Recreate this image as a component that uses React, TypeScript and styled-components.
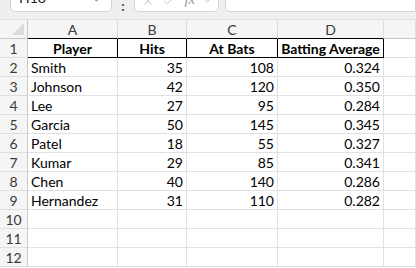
import React from "react";
import styled, { createGlobalStyle } from "styled-components";
import { X, Check, ChevronDown } from "lucide-react";

const GlobalStyle = createGlobalStyle`
  html, body {
    margin: 0;
    padding: 0;
    background: #ffffff;
    overflow: hidden;
  }
  body {
    font-family: Lato, "Liberation Sans", sans-serif;
  }
`;

const columns = ["A", "B", "C", "D", ""];
const headers = ["Player", "Hits", "At Bats", "Batting Average"];

const players = [
  ["Smith", 35, 108, "0.324"],
  ["Johnson", 42, 120, "0.350"],
  ["Lee", 27, 95, "0.284"],
  ["Garcia", 50, 145, "0.345"],
  ["Patel", 18, 55, "0.327"],
  ["Kumar", 29, 85, "0.341"],
  ["Chen", 40, 140, "0.286"],
  ["Hernandez", 31, 110, "0.282"],
];

export default function App() {
  return (
    <>
      <GlobalStyle />
      <Window>
        <FormulaBar>
          <NameBox>
            <span>H18</span>
            <ChevronDown size={13} strokeWidth={1.5} color="#555" />
          </NameBox>
          <Dots>:</Dots>
          <ActionBox>
            <X size={14} strokeWidth={1.3} color="#b5b5b5" />
            <Check size={14} strokeWidth={1.3} color="#b5b5b5" />
            <Fx>fx</Fx>
            <ChevronDown size={11} strokeWidth={1.5} color="#9a9a9a" />
          </ActionBox>
          <FormulaInput />
        </FormulaBar>

        <Sheet>
          <Corner>
            <CornerTriangle />
          </Corner>
          {columns.map((c, i) => (
            <ColHeader key={"h" + i} $boxed={i < 4}>
              {c}
            </ColHeader>
          ))}

          <RowHeader>1</RowHeader>
          {headers.map((h) => (
            <TitleCell key={h}>{h}</TitleCell>
          ))}
          <Cell />

          {players.map((p, r) => (
            <React.Fragment key={String(p[0])}>
              <RowHeader>{r + 2}</RowHeader>
              <Cell>{p[0]}</Cell>
              <Cell $num>{p[1]}</Cell>
              <Cell $num>{p[2]}</Cell>
              <Cell $num>{p[3]}</Cell>
              <Cell />
            </React.Fragment>
          ))}

          {[10, 11, 12].map((n) => (
            <React.Fragment key={n}>
              <RowHeader>{n}</RowHeader>
              <Cell />
              <Cell />
              <Cell />
              <Cell />
              <Cell />
            </React.Fragment>
          ))}
        </Sheet>
      </Window>
    </>
  );
}

const Window = styled.div`
  width: 416px;
  height: 268px;
  display: flex;
  flex-direction: column;
  overflow: hidden;
  background: #ffffff;
`;

const FormulaBar = styled.div`
  height: 20px;
  flex-shrink: 0;
  display: flex;
  align-items: flex-start;
  background: #efefef;
  overflow: hidden;
  padding-left: 10px;
  box-sizing: border-box;
  border-bottom: 1px solid #e2e2e2;
`;

const NameBox = styled.div`
  width: 102px;
  height: 25px;
  margin-top: -13px;
  box-sizing: border-box;
  background: #ffffff;
  border: 1px solid #d4d4d4;
  border-radius: 5px;
  display: flex;
  align-items: center;
  justify-content: space-between;
  padding: 0 8px 0 8px;
  font-size: 14px;
  color: #222;
  span {
    margin-top: -4px;
  }
`;

const Dots = styled.div`
  width: 22px;
  text-align: center;
  font-size: 13px;
  font-weight: 700;
  color: #444;
  line-height: 1;
  margin-top: 0px;
`;

const ActionBox = styled.div`
  width: 85px;
  height: 25px;
  margin-top: -13px;
  box-sizing: border-box;
  background: #ffffff;
  border: 1px solid #d4d4d4;
  border-radius: 5px;
  display: flex;
  align-items: center;
  gap: 7px;
  padding: 2px 5px 0 6px;
`;

const Fx = styled.span`
  font-family: "Liberation Serif", serif;
  font-style: italic;
  font-size: 15px;
  color: #9a9a9a;
  margin-left: 2px;
  margin-top: -2px;
`;

const FormulaInput = styled.div`
  flex: 1;
  height: 25px;
  margin-top: -13px;
  margin-left: 6px;
  box-sizing: border-box;
  background: #ffffff;
  border: 1px solid #d4d4d4;
  border-radius: 5px 0 0 5px;
`;

const Sheet = styled.div`
  display: grid;
  grid-template-columns: 28px 90px 69px 91px 106px 1fr;
  grid-auto-rows: 19px;
  font-size: 14px;
  color: #000;
`;

const Corner = styled.div`
  background: #f5f5f5;
  border-right: 1px solid #c8c8c8;
  border-bottom: 1px solid #c8c8c8;
  box-sizing: border-box;
  display: flex;
  align-items: flex-end;
  justify-content: flex-end;
  padding: 0 3px 3px 0;
`;

const CornerTriangle = styled.div`
  width: 0;
  height: 0;
  border-left: 12px solid transparent;
  border-bottom: 12px solid #dcdcdc;
`;

const ColHeader = styled.div<{ $boxed?: boolean }>`
  background: #f5f5f5;
  box-sizing: border-box;
  border-right: 1px solid #dcdcdc;
  border-bottom: 1px solid ${(p) => (p.$boxed ? "#000" : "#c8c8c8")};
  display: flex;
  align-items: center;
  justify-content: center;
  font-size: 14px;
  color: #3a3a3a;
`;

const RowHeader = styled.div`
  background: #f5f5f5;
  box-sizing: border-box;
  border-right: 1px solid #c8c8c8;
  border-bottom: 1px solid #dedede;
  display: flex;
  align-items: center;
  justify-content: center;
  font-size: 14px;
  color: #3a3a3a;
`;

const Cell = styled.div<{ $num?: boolean }>`
  box-sizing: border-box;
  border-right: 1px solid #e1e1e1;
  border-bottom: 1px solid #e1e1e1;
  display: flex;
  align-items: center;
  justify-content: ${(p) => (p.$num ? "flex-end" : "flex-start")};
  padding: 0 3px;
  white-space: nowrap;
  overflow: hidden;
`;

const TitleCell = styled.div`
  box-sizing: border-box;
  border-right: 1px solid #000;
  border-bottom: 1px solid #000;
  display: flex;
  align-items: center;
  justify-content: center;
  font-size: 14px;
  font-weight: 700;
  white-space: nowrap;
  overflow: hidden;
`;
